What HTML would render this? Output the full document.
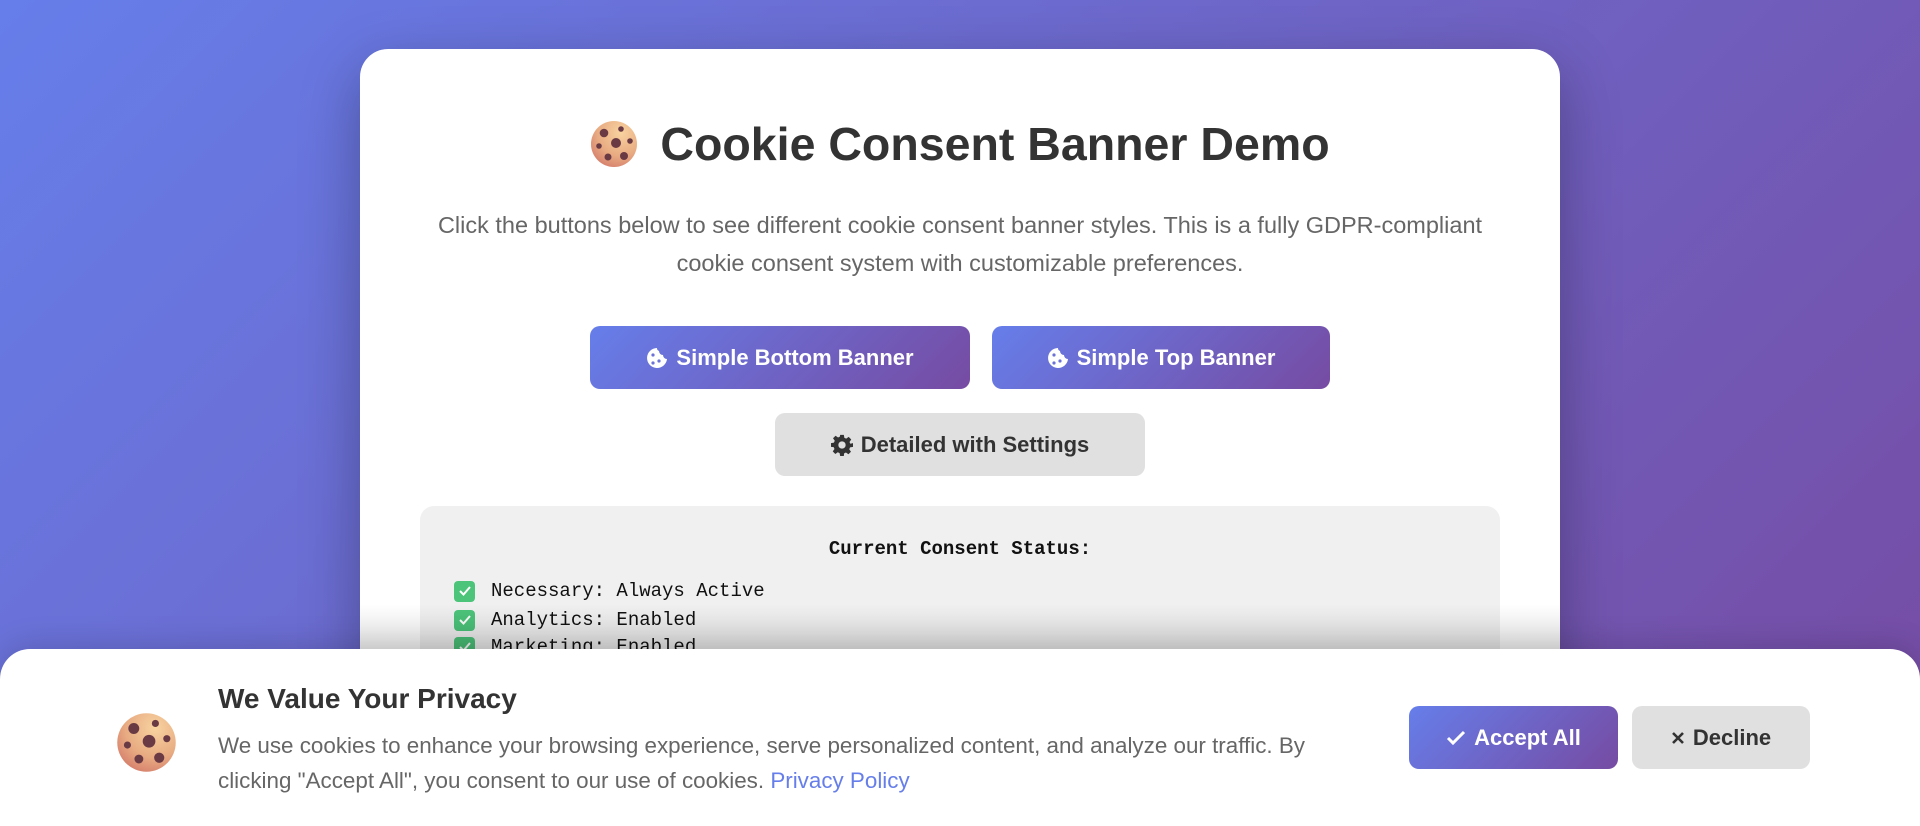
<!DOCTYPE html>
<html><head><meta charset="utf-8"><style>
*{margin:0;padding:0;box-sizing:border-box}
html,body{width:1920px;height:826px;overflow:hidden}
body{background:linear-gradient(135deg,#667eea 0%,#764ba2 100%);font-family:"Liberation Sans",sans-serif;position:relative}
.card{position:absolute;left:360px;top:49px;width:1200px;height:777px;background:#fff;border-radius:28px 28px 0 0;box-shadow:0 20px 60px rgba(0,0,0,.3);overflow:hidden}
h1{position:absolute;left:0;right:0;top:63px;text-align:center;font-size:46.5px;font-weight:bold;color:#333;line-height:64px}
h1 svg{vertical-align:-8px;margin-right:22px}
p.lead{position:absolute;left:20px;right:20px;top:157px;text-align:center;font-size:23.5px;line-height:38px;color:#666}
.btn{position:absolute;height:63px;border-radius:10px;font-size:22px;font-weight:bold;display:flex;align-items:center;justify-content:center;gap:8px}
.g{background:linear-gradient(135deg,#667eea,#764ba2);color:#fff}
.gr{background:#e0e0e0;color:#333}
.status{position:absolute;left:60px;top:457px;width:1080px;height:320px;background:#f0f0f0;border-radius:14px 14px 0 0;font-family:"Liberation Mono",monospace;font-size:19px;color:#111}
.status h3{text-align:center;font-size:19px;margin-top:32px;font-weight:bold}
.row{position:absolute;left:34px;display:flex;align-items:center;gap:16px;height:24px}
.ck{width:21px;height:21px;border-radius:4px;background:#4cc47a;display:inline-flex;align-items:center;justify-content:center}
.fade{position:absolute;left:0;right:0;top:555px;height:45px;background:linear-gradient(to bottom,rgba(0,0,0,0),rgba(0,0,0,.12))}
.banner{position:absolute;left:0;top:649px;width:1920px;height:177px;background:#fff;border-radius:30px 30px 0 0;box-shadow:0 -5px 30px rgba(0,0,0,.15)}
.banner h2{position:absolute;left:218px;top:34px;font-size:28px;font-weight:bold;color:#333}
.banner p{position:absolute;left:218px;top:79px;width:1160px;font-size:22.4px;line-height:35px;color:#666}
.banner a{color:#667eea;text-decoration:none}
</style></head><body>
<svg width="0" height="0" style="position:absolute"><defs>
<radialGradient id="cg" cx="0.65" cy="0.25" r="0.85"><stop offset="0" stop-color="#f8d3a0"/><stop offset="0.6" stop-color="#e8ab82"/><stop offset="1" stop-color="#d47a6a"/></radialGradient>
<g id="cookie"><circle cx="24" cy="24" r="23" fill="url(#cg)"/><circle cx="14" cy="13" r="4.3" fill="#6a3a44"/><circle cx="31" cy="9" r="2.8" fill="#6a3a44"/><circle cx="26" cy="23" r="5" fill="#6a3a44"/><circle cx="40" cy="21" r="2.8" fill="#6a3a44"/><circle cx="9" cy="26" r="2.8" fill="#6a3a44"/><circle cx="18" cy="37" r="3.5" fill="#6a3a44"/><circle cx="34" cy="36" r="4" fill="#6a3a44"/></g>
</defs></svg>
<div class="card">
<h1><svg width="48" height="48" viewBox="0 0 48 48"><use href="#cookie"/></svg>Cookie Consent Banner Demo</h1>
<p class="lead">Click the buttons below to see different cookie consent banner styles. This is a fully GDPR-compliant<br>cookie consent system with customizable preferences.</p>
<div class="btn g" style="left:230px;top:277px;width:380px"><svg width="22" height="24" viewBox="0 0 22 24"><path d="M11 2a10 10 0 1 0 10 11 4 4 0 0 1-4-4 4 4 0 0 1-4-4 3 3 0 0 1-2-3z" fill="#fff"/><circle cx="7" cy="9" r="1.6" fill="#6d72d8"/><circle cx="13" cy="15" r="1.6" fill="#6d72d8"/><circle cx="7" cy="17" r="1.6" fill="#6d72d8"/></svg>Simple Bottom Banner</div>
<div class="btn g" style="left:632px;top:277px;width:338px"><svg width="22" height="24" viewBox="0 0 22 24"><path d="M11 2a10 10 0 1 0 10 11 4 4 0 0 1-4-4 4 4 0 0 1-4-4 3 3 0 0 1-2-3z" fill="#fff"/><circle cx="7" cy="9" r="1.6" fill="#6d72d8"/><circle cx="13" cy="15" r="1.6" fill="#6d72d8"/><circle cx="7" cy="17" r="1.6" fill="#6d72d8"/></svg>Simple Top Banner</div>
<div class="btn gr" style="left:415px;top:364px;width:370px"><svg width="22" height="22" viewBox="0 0 24 24"><path fill="#333" d="M10 1h4l.6 3.2 2 .9 2.7-1.9 2.8 2.8-1.9 2.7.9 2L24 10v4l-3.2.6-.9 2 1.9 2.7-2.8 2.8-2.7-1.9-2 .9L14 24h-4l-.6-3.2-2-.9-2.7 1.9-2.8-2.8 1.9-2.7-.9-2L0 14v-4l3.2-.6.9-2L2.2 4.7 5 1.9l2.7 1.9 2-.9zM12 8a4 4 0 1 0 0 8 4 4 0 0 0 0-8z"/></svg>Detailed with Settings</div>
<div class="status"><h3>Current Consent Status:</h3>
<div class="row" style="top:73px"><span class="ck"><svg width="14" height="12" viewBox="0 0 14 12"><path d="M2 6l3.5 3.5L12 2" stroke="#fff" stroke-width="2" fill="none"/></svg></span>Necessary: Always Active</div>
<div class="row" style="top:102px"><span class="ck"><svg width="14" height="12" viewBox="0 0 14 12"><path d="M2 6l3.5 3.5L12 2" stroke="#fff" stroke-width="2" fill="none"/></svg></span>Analytics: Enabled</div>
<div class="row" style="top:129px"><span class="ck"><svg width="14" height="12" viewBox="0 0 14 12"><path d="M2 6l3.5 3.5L12 2" stroke="#fff" stroke-width="2" fill="none"/></svg></span>Marketing: Enabled</div>
</div>
<div class="fade"></div>
</div>
<div class="banner">
<svg style="position:absolute;left:116px;top:63px" width="61" height="61" viewBox="0 0 48 48"><use href="#cookie"/></svg>
<h2>We Value Your Privacy</h2>
<p>We use cookies to enhance your browsing experience, serve personalized content, and analyze our traffic. By<br>clicking "Accept All", you consent to our use of cookies. <a>Privacy Policy</a></p>
<div class="btn g" style="left:1409px;top:57px;width:209px;font-size:22px"><svg width="20" height="16" viewBox="0 0 20 16"><path d="M2 8l5 5L18 2" stroke="#fff" stroke-width="3" fill="none"/></svg>Accept All</div>
<div class="btn gr" style="left:1632px;top:57px;width:178px;font-size:22px"><svg width="14" height="14" viewBox="0 0 14 14"><path d="M2 2l10 10M12 2L2 12" stroke="#333" stroke-width="2.6"/></svg>Decline</div>
</div>
</body></html>
